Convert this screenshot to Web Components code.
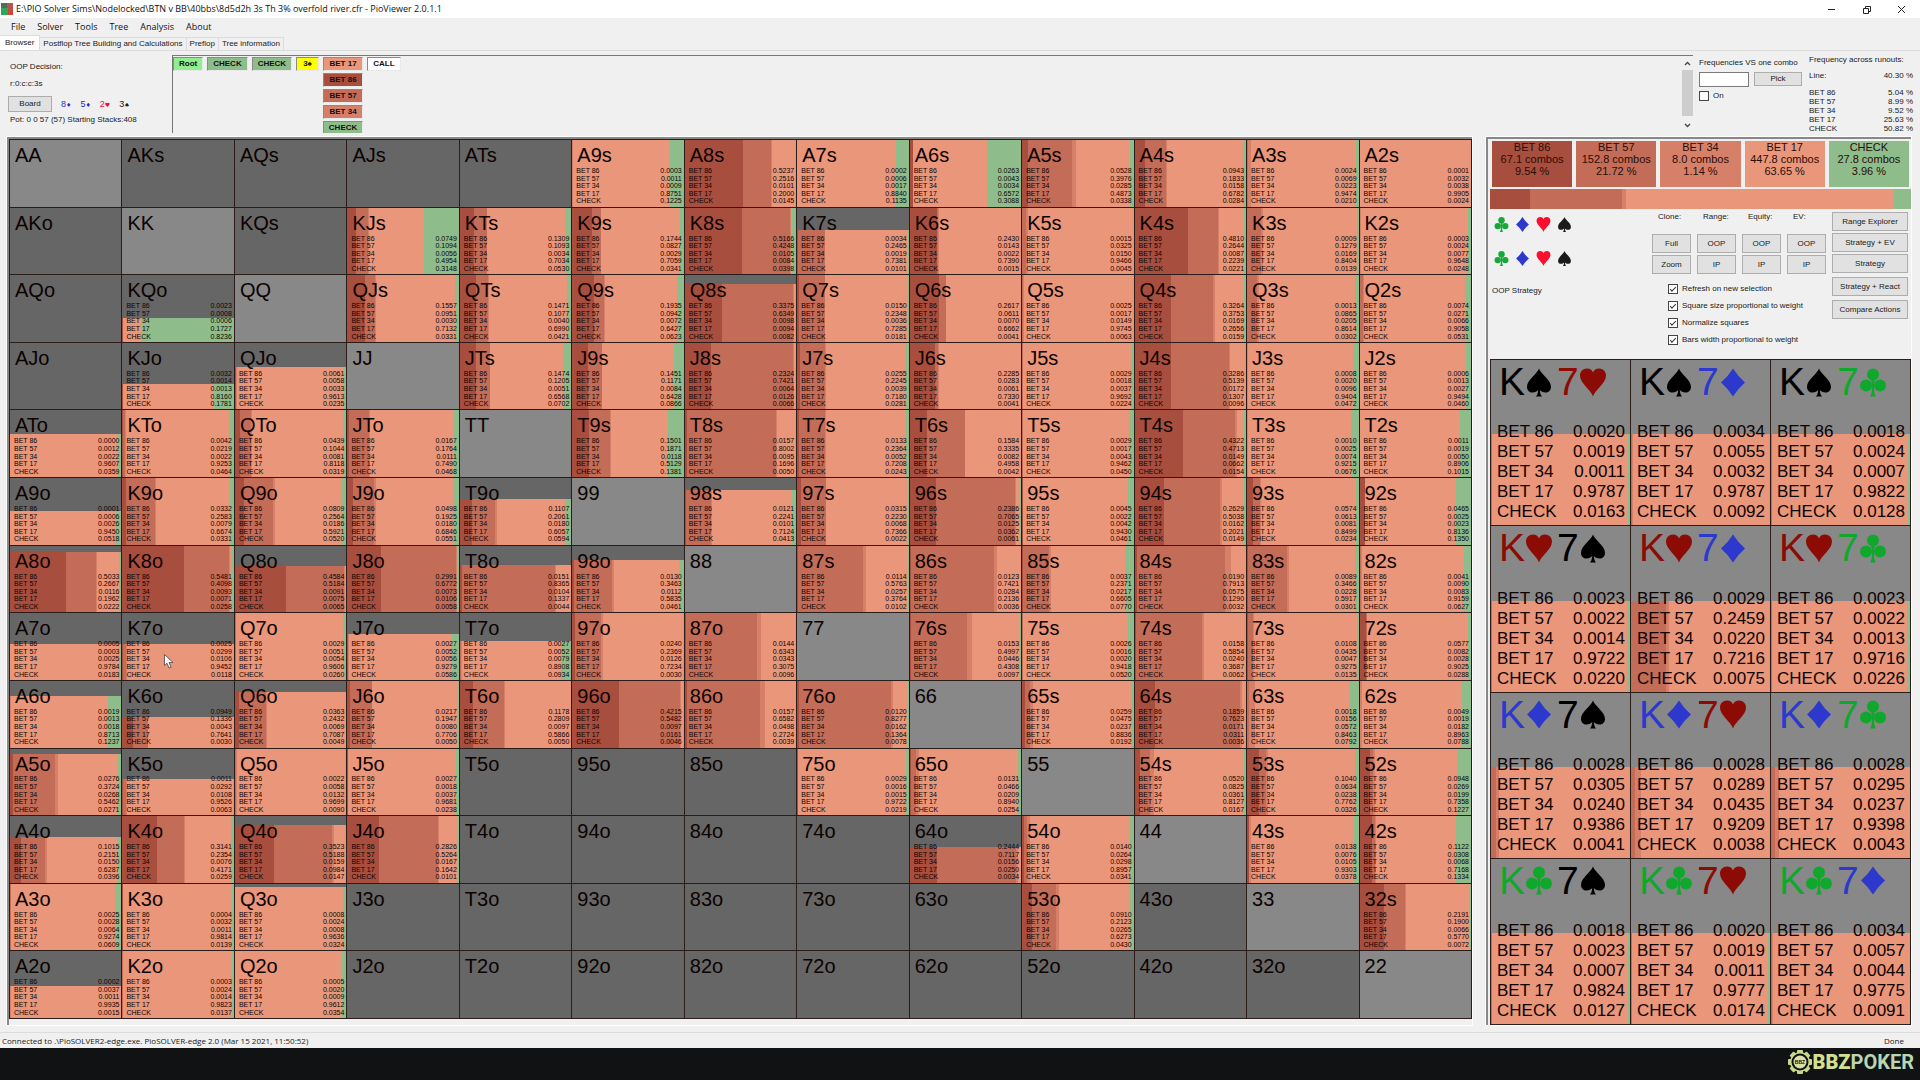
<!DOCTYPE html>
<html lang="en">
<head>
<meta charset="utf-8">
<title>PioViewer 2.0.1.1</title>
<style>
  html, body {
    margin: 0;
    height: 100%;
  }
  body {
    --bet86: #a84e3f;
    --bet57: #c36c58;
    --bet34: #d6806a;
    --bet17: #e9967a;
    --check: #8fbc8b;
    --face: #f0f0f0;
    --ui: "Liberation Sans", Arial, sans-serif;
    --chrome: "Open Sans", "Noto Sans", sans-serif;
    background: #101214;
    color: #1a1a1a;
    font: 8px/10px var(--ui);
  }
</style>
</head>
<body>
<pio-app></pio-app>

<script>
const ACTIONS = ['BET 86', 'BET 57', 'BET 34', 'BET 17', 'CHECK'];
const COLORS = ['--bet86', '--bet57', '--bet34', '--bet17', '--check'];
const RANKS = 'AKQJT98765432';

// hand, then the five action frequencies in 1/10000
const STRATEGY = `
A9s 3 11 9 8751 1225
A8s 5237 2516 101 2000 145
A7s 2 6 17 8840 1135
A6s 263 43 34 6572 3088
A5s 528 3976 285 4873 338
A4s 943 1833 158 6782 284
A3s 24 69 223 9474 210
A2s 1 32 38 9905 24
KJs 749 1094 56 4954 3148
KTs 1309 1093 34 7034 530
K9s 1744 827 29 7059 341
K8s 5166 4248 105 84 398
K7s 34 2465 19 7381 101
K6s 2430 143 22 7390 15
K5s 15 325 150 9466 45
K4s 4810 2644 87 2239 221
K3s 9 1279 169 8404 139
K2s 3 24 77 9648 248
KQo 23 8 6 1727 8236
QJs 1557 951 30 7132 331
QTs 1471 1077 40 6990 421
Q9s 1935 942 72 6427 623
Q8s 3375 6349 98 94 82
Q7s 150 2348 36 7285 181
Q6s 2617 611 70 6662 41
Q5s 25 17 149 9745 63
Q4s 3264 3753 169 2656 159
Q3s 13 865 205 8614 302
Q2s 74 271 66 9058 531
KJo 32 14 13 8160 1781
QJo 61 58 33 9613 235
JTs 1474 1205 51 6568 702
J9s 1451 1171 84 6428 866
J8s 2324 7421 64 126 66
J7s 255 2245 39 7180 281
J6s 2285 283 61 7330 41
J5s 29 18 37 9692 224
J4s 3286 5139 172 1307 96
J3s 8 20 96 9404 472
J2s 6 13 27 9494 460
ATo 0 12 22 9607 359
KTo 42 219 22 9253 464
QTo 439 1044 81 8118 319
JTo 167 1764 111 7490 468
T9s 1501 1871 118 5129 1381
T8s 157 8002 95 1696 50
T7s 133 2364 52 7208 243
T6s 1584 3335 82 4958 42
T5s 29 17 43 9462 450
T4s 4322 4713 149 662 154
T3s 10 25 74 9215 676
T2s 11 19 50 8906 1015
A9o 1 6 26 9450 518
K9o 332 2583 79 6674 331
Q9o 809 2564 186 5921 520
J9o 498 1925 180 6846 551
T9o 1107 2061 180 6057 594
98s 121 2241 101 7124 413
97s 315 2230 68 7366 22
96s 2386 7065 125 362 61
95s 45 22 42 9430 461
94s 2629 5038 162 2021 149
93s 574 613 81 8499 234
92s 465 25 23 8136 1350
A8o 5033 2667 116 1962 222
K8o 5481 4098 93 71 258
Q8o 4584 5184 91 75 65
J8o 2991 6772 73 106 58
T8o 151 8365 104 1337 44
98o 130 3463 112 5835 461
87s 114 5763 257 3764 102
86s 123 7421 284 2136 36
85s 37 2371 217 6605 770
84s 190 7913 575 1290 32
83s 89 3466 228 5917 301
82s 41 90 83 9159 627
A7o 5 3 25 9784 183
K7o 25 299 106 9452 118
Q7o 29 51 54 9606 260
J7o 27 52 56 9279 586
T7o 27 52 79 8908 934
97o 240 2369 126 7234 30
87o 144 6343 343 3075 96
76s 153 4997 446 4308 97
75s 26 16 20 9418 520
74s 158 5854 240 3687 62
73s 108 435 47 9275 135
72s 577 82 28 9025 288
A6o 19 13 18 8713 1237
K6o 949 1336 43 7641 30
Q6o 363 2432 69 7087 49
J6o 217 1947 80 7706 50
T6o 1178 2809 97 5866 50
96o 4215 5482 97 161 46
86o 157 6582 498 2724 39
76o 120 8277 162 1364 78
65s 259 475 237 8836 192
64s 1859 7623 171 311 36
63s 18 156 572 8463 792
62s 49 19 182 8963 788
A5o 276 3724 268 5462 271
K5o 11 292 108 9526 63
Q5o 22 58 132 9699 90
J5o 27 18 37 9681 238
75o 29 16 15 9722 219
65o 131 466 209 8940 254
54s 520 825 361 8127 167
53s 1040 634 238 7762 326
52s 948 269 199 7358 1227
A4o 1015 2151 150 6287 396
K4o 3141 2354 76 4171 259
Q4o 3523 5188 159 984 147
J4o 2826 5264 167 1642 101
64o 2444 7117 156 250 34
54o 140 264 298 8957 341
43s 138 76 105 9303 378
42s 1122 308 68 7168 1334
A3o 25 28 64 9274 609
K3o 4 32 11 9814 139
Q3o 8 24 8 9636 324
53o 910 2123 265 6273 430
32s 2191 1900 66 5770 72
A2o 2 37 11 9935 15
K2o 3 24 14 9823 137
Q2o 5 20 9 9612 354`;

// share of the square that is filled, in percent; 100 when not listed
const WEIGHTS = {
  KQo: 36, KJo: 38, QJo: 64, K7s: 67, Q8s: 87, ATo: 65, A9o: 50, T9o: 69,
  A8o: 90, Q8o: 69, T8o: 71, A7o: 54, K7o: 54, J7o: 69, T7o: 58, '98s': 82,
  '98o': 79, A6o: 77, K6o: 46, Q6o: 84, A5o: 92, K5o: 54, A4o: 69, Q4o: 86,
  Q3o: 95, A2o: 48, '64o': 53
};

const COMBOS = [
  ['s', 'h', '20 19 11 9787 163'],
  ['s', 'd', '34 55 32 9787 92'],
  ['s', 'c', '18 24 7 9822 128'],
  ['h', 's', '23 22 14 9722 220'],
  ['h', 'd', '29 2459 220 7216 75'],
  ['h', 'c', '23 22 13 9716 226'],
  ['d', 's', '28 305 240 9386 41'],
  ['d', 'h', '28 289 435 9209 38'],
  ['d', 'c', '28 295 237 9398 43'],
  ['c', 's', '18 23 7 9824 127'],
  ['c', 'h', '20 19 11 9777 174'],
  ['c', 'd', '34 57 44 9775 91']
];

class SuitIcon extends HTMLElement {
  static shapes = {
    s: '<path d="M12 0C14 6 24 11 24 18.5C24 22 21.5 24 18.5 24C16 24 14 23 12.8 21.5C13 25 14 27 15 28H9C10 27 11 25 11.2 21.5C10 23 8 24 5.5 24C2.5 24 0 22 0 18.5C0 11 10 6 12 0Z"/>',
    h: '<path d="M12 28C10 21-1 15-1 7C-1 3 2 0 6 0C9 0 11 1.500 12 4C13 1.500 15 0 18 0C22 0 25 3 25 7C25 15 14 21 12 28Z"/>',
    d: '<path d="M12 0Q17 8 24 14Q17 20 12 28Q7 20 0 14Q7 8 12 0Z"/>',
    c: '<circle cx="12" cy="6" r="6"/><circle cx="5" cy="17" r="6"/><circle cx="19" cy="17" r="6"/><path d="M10 10H14L13 17C13 23 13.500 26 15 28H9C10.500 26 11 23 11 17Z"/>'
  };

  constructor() {
    super();
    this.attachShadow({ mode: 'open' });
  }

  connectedCallback() {
    this.shadowRoot.innerHTML = `
      <style>
        :host { display: inline-block; width: 13px; height: 15px; }
        svg { display: block; width: 100%; height: 100%; overflow: visible; fill: currentColor; }
      </style>
      <svg viewBox="0 0 24 28" aria-hidden="true">${SuitIcon.shapes[this.getAttribute('suit')]}</svg>
    `;
  }
}

// One square: coloured bars, a heading in the slot and the table of frequencies
class StrategySquare extends HTMLElement {
  constructor() {
    super();
    this.attachShadow({ mode: 'open' });
  }

  connectedCallback() {
    const freqs = this.getAttribute('freqs');
    const values = freqs ? freqs.split(' ').map(Number) : [];
    const weight = this.getAttribute('weight') || 100;
    const bars = values.map((v, i) => `<i style="flex-grow:${v};background:var(${COLORS[i]})"></i>`).join('');
    const rows = values.map((v, i) => `<tr><th>${ACTIONS[i]}</th><td>${(v / 10000).toFixed(4)}</td></tr>`).join('');

    this.shadowRoot.innerHTML = `
      <style>
        :host {
          display: grid;
          grid-template: 100% / 100%;
          position: relative;
          min-width: 0;
          min-height: 0;
          overflow: hidden;
          box-sizing: border-box;
          border-right: 1px solid #2a1c18;
          border-bottom: 1px solid #2a1c18;
          background: #666;
          color: #0c0200;
          font-size: 7px;
          line-height: 7px;
        }
        :host([pair]) { background: #888; }
        .bars, .text { grid-area: 1 / 1; }
        .bars { display: flex; align-self: end; height: ${weight}%; }
        .bars i { flex: 0 0 0px; }
        .text {
          display: flex;
          flex-direction: column;
          justify-content: space-between;
          padding: 4px 2px 2px 4px;
        }
        ::slotted(span) { font-size: 20px; line-height: 22px; padding-left: 1px; }
        table { width: 100%; height: 38px; border-collapse: collapse; }
        th { padding: 0; text-align: left; font-weight: normal; }
        td { padding: 0; text-align: right; }

        :host([large]) { background: #888; font-size: 17px; line-height: 20px; }
        :host([large]) .text { padding: 2px 5px 3px 6px; }
        :host([large]) table { height: 100px; }
        ::slotted(div) {
          display: flex;
          align-items: center;
          gap: 2px;
          padding-left: 2px;
          font-size: 39px;
          line-height: 40px;
        }
      </style>
      <div class="bars">${bars}</div>
      <div class="text"><slot></slot>${rows ? `<table><tbody>${rows}</tbody></table>` : ''}</div>
      <slot name="over"></slot>
    `;
  }
}

class RangeMatrix extends HTMLElement {
  constructor() {
    super();
    this.attachShadow({ mode: 'open' });
  }

  connectedCallback() {
    const data = {};
    STRATEGY.trim().split('\n').forEach((line) => {
      const [hand, ...rest] = line.split(' ');
      data[hand] = rest.join(' ');
    });

    let cells = '';
    for (let r = 0; r < 13; r++) {
      for (let c = 0; c < 13; c++) {
        const hand = r === c ? RANKS[r] + RANKS[c]
          : r < c ? `${RANKS[r]}${RANKS[c]}s` : `${RANKS[c]}${RANKS[r]}o`;
        const attrs = (r === c ? ' pair' : '')
          + (data[hand] ? ` freqs="${data[hand]}"` : '')
          + (WEIGHTS[hand] ? ` weight="${WEIGHTS[hand]}"` : '');
        const pointer = hand === 'K7o' ? '<mouse-pointer slot="over"></mouse-pointer>' : '';
        cells += `<strategy-square${attrs}><span>${hand}</span>${pointer}</strategy-square>`;
      }
    }

    this.shadowRoot.innerHTML = `
      <style>
        :host {
          display: grid;
          grid-template: repeat(13, 1fr) / repeat(13, 1fr);
          border-left: 1px solid #2a1c18;
          border-top: 1px solid #2a1c18;
        }
      </style>
      ${cells}
    `;
  }
}

class MousePointer extends HTMLElement {
  constructor() {
    super();
    this.attachShadow({ mode: 'open' });
    this.shadowRoot.innerHTML = `
      <style>
        :host { display: block; position: absolute; left: 42px; top: 41px; width: 10px; height: 15px; }
        svg { display: block; }
      </style>
      <svg width="10" height="15" viewBox="0 0 10 15" aria-hidden="true">
        <path d="M.5.5V11.500L3 9.200L5 14L7 13.200L5 8.500H9Z" fill="#fff" stroke="#444" stroke-width=".8"/>
      </svg>
    `;
  }
}

class ComboGrid extends HTMLElement {
  constructor() {
    super();
    this.attachShadow({ mode: 'open' });
    this.shadowRoot.innerHTML = `
      <style>
        :host {
          display: grid;
          grid-template: repeat(4, 1fr) / repeat(3, 1fr);
          border-left: 1px solid #2a1c18;
          border-top: 1px solid #2a1c18;
        }
        .s { color: #000; }
        .h { color: #8c0b05; }
        .d { color: #2c39cc; }
        .c { color: #0fa82c; }
        suit-icon { width: 24px; height: 29px; margin-right: 4px; }
        b { font-weight: normal; }
      </style>
      ${COMBOS.map(([a, b, freqs]) => `
        <strategy-square large weight="55" freqs="${freqs}">
          <div><b class="${a}">K</b><suit-icon class="${a}" suit="${a}"></suit-icon><b class="${b}">7</b><suit-icon class="${b}" suit="${b}"></suit-icon></div>
        </strategy-square>`).join('')}
    `;
  }
}

class PioButton extends HTMLElement {
  constructor() {
    super();
    this.attachShadow({ mode: 'open' });
    this.shadowRoot.innerHTML = `
      <style>
        :host { display: block; height: 19px; }
        button {
          width: 100%;
          height: 100%;
          padding: 0;
          border: 1px solid #adadad;
          background: #e1e1e1;
          color: inherit;
          font: inherit;
        }
      </style>
      <button type="button"><slot></slot></button>
    `;
  }
}

class PioCheck extends HTMLElement {
  constructor() {
    super();
    this.attachShadow({ mode: 'open' });
  }

  connectedCallback() {
    this.shadowRoot.innerHTML = `
      <style>
        :host { display: block; }
        label { display: flex; align-items: center; gap: 4px; }
        input {
          appearance: none;
          width: 10px;
          height: 10px;
          margin: 0;
          border: 1px solid #444;
          background: #fff;
          display: grid;
          place-items: center;
        }
        input:checked::after {
          content: "";
          width: 5px;
          height: 2px;
          border: solid #333;
          border-width: 0 0 1px 1px;
          transform: translateY(-1px) rotate(-45deg);
        }
      </style>
      <label><input type="checkbox" ${this.hasAttribute('checked') ? 'checked' : ''}><slot></slot></label>
    `;
  }
}

class TitleBar extends HTMLElement {
  constructor() {
    super();
    this.attachShadow({ mode: 'open' });
    this.shadowRoot.innerHTML = `
      <style>
        :host { display: block; background: #fff; font-family: var(--chrome); color: #111; }
        .bar { display: flex; align-items: center; gap: 3px; height: 18px; padding: 0 13px 0 1px; font-size: 9px; }
        .controls { display: flex; gap: 24px; margin-left: auto; }
        .controls button { width: 11px; height: 11px; padding: 0; border: 0; background: none; }
        svg { display: block; }
        nav { display: flex; gap: 12px; height: 17px; align-items: center; padding-left: 11px; background: var(--face); font-size: 9px; }
        a { color: inherit; text-decoration: none; }
      </style>
      <div class="bar">
        <svg width="12" height="12" aria-hidden="true">
          <rect width="12" height="12" fill="#b8544a"/><rect width="6" height="6" fill="#5a6a58"/>
          <rect y="5" width="7" height="7" fill="#28a95c"/><rect x="7" y="7" width="5" height="5" fill="#d24636"/>
        </svg>
        <span>E:\\PIO Solver Sims\\Nodelocked\\BTN v BB\\40bbs\\8d5d2h 3s Th 3% overfold river.cfr - PioViewer 2.0.1.1</span>
        <div class="controls">
          <button aria-label="Minimize"><svg width="11" height="11"><path d="M2 5.500H9" stroke="#222"/></svg></button>
          <button aria-label="Restore"><svg width="11" height="11"><path d="M2.500 4.500H7.500V9.500H2.500ZM4.500 4V2.500H9.500V7.500H8" fill="none" stroke="#222"/></svg></button>
          <button aria-label="Close"><svg width="11" height="11"><path d="M2 2L9 9M9 2L2 9" stroke="#222"/></svg></button>
        </div>
      </div>
      <nav>
        <a href="#">File</a><a href="#">Solver</a><a href="#">Tools</a><a href="#">Tree</a><a href="#">Analysis</a><a href="#">About</a>
      </nav>
    `;
  }
}

class TabStrip extends HTMLElement {
  constructor() {
    super();
    this.attachShadow({ mode: 'open' });
    this.shadowRoot.innerHTML = `
      <style>
        :host { display: flex; align-items: flex-end; height: 15px; border-bottom: 1px solid #dcdcdc; }
        button {
          height: 13px;
          padding: 0 3px;
          border: 1px solid #dcdcdc;
          border-width: 1px 1px 0 0;
          background: var(--face);
          color: inherit;
          font: inherit;
        }
        button[aria-selected=true] { height: 15px; padding: 0 5px; background: #fff; }
      </style>
      <button aria-selected="true" role="tab">Browser</button>
      <button role="tab">Postflop Tree Building and Calculations</button>
      <button role="tab">Preflop</button>
      <button role="tab">Tree information</button>
    `;
  }
}

class DecisionTree extends HTMLElement {
  constructor() {
    super();
    this.attachShadow({ mode: 'open' });
    this.shadowRoot.innerHTML = `
      <style>
        :host {
          display: flex;
          justify-content: space-between;
          height: 77px;
          overflow: hidden;
          border-left: 1px solid #777;
          border-top: 1px solid #777;
        }
        .path { display: flex; gap: 4px; padding-top: 1px; align-items: flex-start; }
        .column { display: grid; gap: 2px; }
        button {
          height: 14px;
          padding: 0 5px;
          border: 1px solid #8a8a8a;
          border-right-color: #e8e8e8;
          border-bottom-color: #e8e8e8;
          color: #111;
          font: bold 8px/12px var(--ui);
        }
        .root { background: #90ee90; }
        .check { background: var(--check); }
        .card { background: #ff0; padding: 0 6px; }
        .call { background: #fff; }
        .b17 { background: var(--bet17); }
        .b34 { background: var(--bet34); }
        .b57 { background: var(--bet57); }
        .b86 { background: var(--bet86); }
        .scroll {
          display: flex;
          flex-direction: column;
          align-items: center;
          justify-content: space-between;
          width: 12px;
          padding: 5px 0;
        }
        .thumb { width: 11px; height: 46px; margin-bottom: 4px; background: #cdcdcd; }
      </style>
      <div class="path">
        <button class="root">Root</button>
        <button class="check">CHECK</button>
        <button class="check">CHECK</button>
        <button class="card">3♠</button>
        <div class="column">
          <button class="b17">BET 17</button>
          <button class="b86">BET 86</button>
          <button class="b57">BET 57</button>
          <button class="b34">BET 34</button>
          <button class="check">CHECK</button>
        </div>
        <button class="call">CALL</button>
      </div>
      <div class="scroll">
        <svg width="7" height="5"><path d="M1 4L3.500 1.500L6 4" fill="none" stroke="#444" stroke-width="1.300"/></svg>
        <div class="thumb"></div>
        <svg width="7" height="5"><path d="M1 1L3.500 3.500L6 1" fill="none" stroke="#444" stroke-width="1.300"/></svg>
      </div>
    `;
  }
}

class BoardInfo extends HTMLElement {
  constructor() {
    super();
    this.attachShadow({ mode: 'open' });
    this.shadowRoot.innerHTML = `
      <style>
        :host { display: flex; flex-direction: column; gap: 7px; padding: 10px 0 0 10px; }
        .cards { display: flex; align-items: center; gap: 9px; margin-left: -2px; }
        pio-button { width: 44px; height: 16px; }
        .cards span { font-size: 9px; }
        small { font: 6px/8px "DejaVu Sans", sans-serif; }
        .d { color: #2a2ac0; }
        .h { color: #dc143c; }
        .foot { display: flex; flex-direction: column; gap: 3px; }
      </style>
      <div>OOP Decision:</div>
      <div>r:0:c:c:3s</div>
      <div class="foot">
        <div class="cards">
          <pio-button>Board</pio-button>
          <span class="d">8<small>♦</small></span>
          <span class="d">5<small>♦</small></span>
          <span class="h">2<small>♥</small></span>
          <span>3<small>♠</small></span>
        </div>
        <div>Pot: 0 0 57 (57) Starting Stacks:408</div>
      </div>
    `;
  }
}

class ComboFrequency extends HTMLElement {
  constructor() {
    super();
    this.attachShadow({ mode: 'open' });
    this.shadowRoot.innerHTML = `
      <style>
        :host { display: flex; flex-direction: column; gap: 4px; padding-top: 3px; }
        .row { display: flex; gap: 5px; }
        input { box-sizing: border-box; width: 50px; height: 15px; margin: 0; padding: 0 2px; border: 1px solid #7a7a7a; background: #fff; font: inherit; }
        pio-button { width: 48px; height: 14px; }
      </style>
      <label for="combo">Frequencies VS one combo</label>
      <div class="row"><input id="combo" type="text"><pio-button>Pick</pio-button></div>
      <pio-check>On</pio-check>
    `;
  }
}

class RunoutFrequency extends HTMLElement {
  constructor() {
    super();
    this.attachShadow({ mode: 'open' });
    const rows = [['BET 86', '5.04 %'], ['BET 57', '8.99 %'], ['BET 34', '9.52 %'], ['BET 17', '25.63 %'], ['CHECK', '50.82 %']];
    this.shadowRoot.innerHTML = `
      <style>
        :host { display: block; line-height: 9px; }
        table { width: 100%; border-collapse: collapse; }
        caption { text-align: left; padding-bottom: 7px; }
        th { padding: 0; text-align: left; font-weight: normal; }
        td { padding: 0; text-align: right; }
        .line > * { padding-bottom: 8px; }
      </style>
      <table>
        <caption>Frequency across runouts:</caption>
        <tbody>
          <tr class="line"><th>Line:</th><td>40.30 %</td></tr>
          ${rows.map(([a, v]) => `<tr><th>${a}</th><td>${v}</td></tr>`).join('')}
        </tbody>
      </table>
    `;
  }
}

class ActionSummary extends HTMLElement {
  constructor() {
    super();
    this.attachShadow({ mode: 'open' });
    const totals = [['67.1', 9.54], ['152.8', 21.72], ['8.0', 1.14], ['447.8', 63.65], ['27.8', 3.96]];
    this.shadowRoot.innerHTML = `
      <style>
        :host { display: block; color: #2a0d05; }
        .boxes { display: grid; grid-template-columns: repeat(5, 1fr); gap: 4px; padding: 0 2px; }
        .box { height: 46px; box-sizing: border-box; font-size: 11px; line-height: 12px; text-align: center; white-space: nowrap; }
        .strip { display: flex; height: 20px; margin-top: 2px; }
      </style>
      <div class="boxes">
        ${totals.map(([n, p], i) => `<div class="box" style="background:var(${COLORS[i]})">${ACTIONS[i]}<br>${n} combos<br>${p} %</div>`).join('')}
      </div>
      <div class="strip">
        ${totals.map(([, p], i) => `<i style="flex:${p} 0 0px;background:var(${COLORS[i]})"></i>`).join('')}
      </div>
    `;
  }
}

class ViewControls extends HTMLElement {
  constructor() {
    super();
    this.attachShadow({ mode: 'open' });
    const suits = ['c', 'd', 'h', 's'].map((s) => `<suit-icon class="${s}" suit="${s}"></suit-icon>`).join('');
    this.shadowRoot.innerHTML = `
      <style>
        :host { display: flex; justify-content: space-between; height: 147px; padding: 3px 3px 0 2px; }
        .suits { display: flex; flex-direction: column; }
        .suits div { display: flex; gap: 8px; height: 34px; align-items: center; padding-left: 3px; }
        .suits div:first-child { margin-top: -5px; }
        .suits p { margin: 11px 0 0; }
        .c { color: #16a838; }
        .d { color: #2c39cc; }
        .h { color: #f8102e; }
        .right { display: flex; gap: 6px; }
        .grid { display: grid; grid-template-columns: repeat(4, 39px); gap: 2px 6px; }
        .grid span { height: 20px; padding-left: 6px; }
        .checks { display: grid; gap: 7px; padding: 10px 0 0 16px; }
        .side { display: flex; flex-direction: column; gap: 2px; width: 76px; }
        .side .apart { margin-top: 2px; }
      </style>
      <div class="suits">
        <div>${suits}</div>
        <div>${suits}</div>
        <p>OOP Strategy</p>
      </div>
      <div class="right">
        <div>
          <div class="grid">
            <span>Clone:</span><span>Range:</span><span>Equity:</span><span>EV:</span>
            <pio-button>Full</pio-button><pio-button>OOP</pio-button><pio-button>OOP</pio-button><pio-button>OOP</pio-button>
            <pio-button>Zoom</pio-button><pio-button>IP</pio-button><pio-button>IP</pio-button><pio-button>IP</pio-button>
          </div>
          <div class="checks">
            <pio-check checked>Refresh on new selection</pio-check>
            <pio-check checked>Square size proportional to weight</pio-check>
            <pio-check checked>Normalize squares</pio-check>
            <pio-check checked>Bars width proportional to weight</pio-check>
          </div>
        </div>
        <div class="side">
          <pio-button>Range Explorer</pio-button>
          <pio-button>Strategy + EV</pio-button>
          <pio-button>Strategy</pio-button>
          <pio-button class="apart">Strategy + React</pio-button>
          <pio-button class="apart">Compare Actions</pio-button>
        </div>
      </div>
    `;
  }
}

class BbzFooter extends HTMLElement {
  constructor() {
    super();
    this.attachShadow({ mode: 'open' });
    let teeth = '';
    for (let a = 0; a < 360; a += 45) {
      teeth += `<rect x="9" y="0" width="6" height="5" rx="1" transform="rotate(${a} 12 12)"/>`;
    }
    this.shadowRoot.innerHTML = `
      <style>
        :host {
          display: flex;
          align-items: center;
          justify-content: flex-end;
          gap: 1px;
          height: 32px;
          padding: 0 6px 4px 0;
          box-sizing: border-box;
          background: #101214;
        }
        span { font: bold 20px/28px Roboto, "Liberation Sans", sans-serif; color: #b9d6b0; }
        b { color: #d3df8f; }
        svg { font: bold 5px "Liberation Sans", sans-serif; }
      </style>
      <svg width="24" height="24" viewBox="0 0 24 24" fill="#c9d88a">
        ${teeth}
        <circle cx="12" cy="12" r="10"/><circle cx="12" cy="12" r="8.500" fill="#101214"/>
        <circle cx="12" cy="12" r="6.500" fill="#d8e0a8"/>
        <text x="12" y="14" text-anchor="middle" fill="#101214">BBZ</text>
      </svg>
      <span><b>BBZ</b>POKER</span>
    `;
  }
}

class PioApp extends HTMLElement {
  constructor() {
    super();
    this.attachShadow({ mode: 'open' });
    this.shadowRoot.innerHTML = `
      <style>
        :host { display: flex; flex-direction: column; min-height: 100vh; }
        .window { flex: 1; display: flex; flex-direction: column; background: var(--face); }
        header { display: flex; height: 86px; box-sizing: border-box; padding: 4px 7px 0 0; }
        board-info { width: 172px; box-sizing: border-box; padding-top: 7px; }
        decision-tree { flex: 1; }
        combo-frequency { width: 104px; padding-left: 6px; }
        runout-frequency { width: 104px; padding-left: 6px; }
        main { flex: 1; display: flex; gap: 14px; padding: 0 9px 0 7px; }
        section { border: 1px solid #888; border-width: 2px 0 0 2px; outline: 1px solid #fff; }
        .range { flex: 1; display: grid; padding-bottom: 6px; }
        .detail { width: 421px; display: flex; flex-direction: column; padding: 2px 0 0 2px; }
        combo-grid { flex: 1; }
        footer {
          display: flex;
          justify-content: space-between;
          align-items: center;
          height: 15px;
          margin-top: 7px;
          padding: 0 16px 0 2px;
          border-top: 1px solid #dcdcdc;
          font: 8px/12px var(--chrome);
        }
      </style>
      <div class="window">
        <title-bar></title-bar>
        <tab-strip></tab-strip>
        <header>
          <board-info></board-info>
          <decision-tree></decision-tree>
          <combo-frequency></combo-frequency>
          <runout-frequency></runout-frequency>
        </header>
        <main>
          <section class="range"><range-matrix></range-matrix></section>
          <section class="detail">
            <action-summary></action-summary>
            <view-controls></view-controls>
            <combo-grid></combo-grid>
          </section>
        </main>
        <footer><span>Connected to .\\PioSOLVER2-edge.exe. PioSOLVER-edge 2.0 (Mar 15 2021, 11:50:52)</span><span>Done</span></footer>
      </div>
      <bbz-footer></bbz-footer>
    `;
  }
}

customElements.define('suit-icon', SuitIcon);
customElements.define('mouse-pointer', MousePointer);
customElements.define('strategy-square', StrategySquare);
customElements.define('range-matrix', RangeMatrix);
customElements.define('combo-grid', ComboGrid);
customElements.define('pio-button', PioButton);
customElements.define('pio-check', PioCheck);
customElements.define('title-bar', TitleBar);
customElements.define('tab-strip', TabStrip);
customElements.define('decision-tree', DecisionTree);
customElements.define('board-info', BoardInfo);
customElements.define('combo-frequency', ComboFrequency);
customElements.define('runout-frequency', RunoutFrequency);
customElements.define('action-summary', ActionSummary);
customElements.define('view-controls', ViewControls);
customElements.define('bbz-footer', BbzFooter);
customElements.define('pio-app', PioApp);
</script>
</body>
</html>
